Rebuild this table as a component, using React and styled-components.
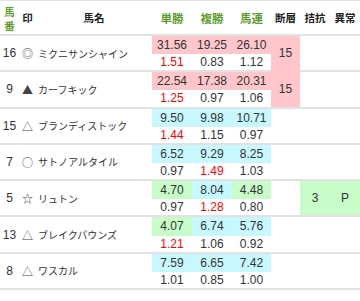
import React from "react";
import styled, { createGlobalStyle } from "styled-components";

const Global = createGlobalStyle`
  html, body { margin: 0; padding: 0; background: #fff; }
  body { font-family: "Liberation Sans", "Noto Sans CJK JP", sans-serif; color: #333; }
`;

const COLS = "19px 17px 116px 40px 40px 39px 29px 30px 30px";
const LINE = "#e2e2e2";
const BG = { pink: "#ffc7cc", cyan: "#c8f8ff", green: "#c8fcc8", none: "transparent" };

const Table = styled.div`
  width: 360px;
  border-top: 1px solid ${LINE};
  box-sizing: border-box;
`;

const HeaderRow = styled.div`
  display: grid;
  grid-template-columns: ${COLS};
  height: 33px;
  border-bottom: 2px solid ${LINE};
`;

const HeadCell = styled.div`
  display: flex;
  align-items: center;
  justify-content: center;
  font-family: "Noto Sans CJK JP", sans-serif;
  font-weight: 700;
  font-size: ${(p) => (p.$green ? "11.5px" : "10.5px")};
  color: ${(p) => (p.$green ? "#5e9c2c" : "#222")};
  line-height: 14px;
  text-align: center;
`;

const Stack = styled.span`
  display: flex;
  flex-direction: column;
  align-items: center;
  gap: 1px;
  font-size: 10.5px;
  line-height: 13px;
  padding-top: 1px;
`;

const Row = styled.div`
  display: grid;
  grid-template-columns: ${COLS};
  grid-template-rows: 18.15px 18.15px;
`;

const Side = styled.div`
  grid-row: 1 / span 2;
  display: flex;
  align-items: center;
  justify-content: ${(p) => p.$align || "center"};
  border-bottom: 2px solid ${LINE};
  font-size: 12px;
  color: #333;
  white-space: nowrap;
`;

const Mark = styled(Side)`
  font-family: "Noto Sans CJK JP", sans-serif;
  font-size: 11px;
  color: #444;
`;

const Name = styled(Side)`
  font-family: "Noto Sans CJK JP", sans-serif;
  font-size: 10px;
  padding-left: 2px;
  color: #333;
`;

const Odds = styled.div`
  display: flex;
  align-items: center;
  justify-content: center;
  font-size: 12px;
  background: ${(p) => BG[p.$bg || "none"]};
  color: ${(p) => (p.$red ? "#ff0000" : "#333")};
  border-bottom: ${(p) => (p.$bottom ? `2px solid ${LINE}` : "none")};
`;

const Block = styled(Side)`
  background: ${(p) => BG[p.$bg || "none"]};
  border-bottom-color: ${(p) => (p.$joined ? BG[p.$bg] : LINE)};
`;

const rows = [
  { no: "16", mark: "◎", name: "ミクニサンシャイン", top: [["31.56", "pink"], ["19.25", "pink"], ["26.10", "pink"]], bot: [["1.51", true], ["0.83"], ["1.12"]], dan: { v: "15", bg: "pink", joined: true } },
  { no: "9", mark: "▲", name: "カーフキック", top: [["22.54", "pink"], ["17.38", "pink"], ["20.31", "pink"]], bot: [["1.25", true], ["0.97"], ["1.06"]], dan: { v: "15", bg: "pink" } },
  { no: "15", mark: "△", name: "ブランディストック", top: [["9.50", "cyan"], ["9.98", "cyan"], ["10.71", "cyan"]], bot: [["1.44", true], ["1.15"], ["0.97"]] },
  { no: "7", mark: "○", name: "サトノアルタイル", top: [["6.52", "cyan"], ["9.29", "cyan"], ["8.25", "cyan"]], bot: [["0.97"], ["1.49", true], ["1.03"]] },
  { no: "5", mark: "☆", name: "リュトン", top: [["4.70", "green"], ["8.04", "cyan"], ["4.48", "green"]], bot: [["0.97"], ["1.28", true], ["0.80"]], kik: "3", ijo: "P" },
  { no: "13", mark: "△", name: "ブレイクパウンズ", top: [["4.07", "green"], ["6.74", "cyan"], ["5.76", "cyan"]], bot: [["1.21", true], ["1.06"], ["0.92"]] },
  { no: "8", mark: "△", name: "ワスカル", top: [["7.59", "cyan"], ["6.65", "cyan"], ["7.42", "cyan"]], bot: [["1.01"], ["0.85"], ["1.00"]] },
];

export default function App() {
  return (
    <>
      <Global />
      <Table>
        <HeaderRow>
          <HeadCell $green>
            <Stack><span>馬</span><span>番</span></Stack>
          </HeadCell>
          <HeadCell>印</HeadCell>
          <HeadCell>馬名</HeadCell>
          <HeadCell $green>単勝</HeadCell>
          <HeadCell $green>複勝</HeadCell>
          <HeadCell $green>馬連</HeadCell>
          <HeadCell>断層</HeadCell>
          <HeadCell>拮抗</HeadCell>
          <HeadCell>異常</HeadCell>
        </HeaderRow>
        {rows.map((r) => (
          <Row key={r.no}>
            <Side style={{ gridColumn: 1 }}>{r.no}</Side>
            <Mark style={{ gridColumn: 2 }}>{r.mark}</Mark>
            <Name style={{ gridColumn: 3 }} $align="flex-start">{r.name}</Name>
            {r.top.map(([v, bg], i) => (
              <Odds key={"t" + i} $bg={bg} style={{ gridColumn: 4 + i, gridRow: 1 }}>{v}</Odds>
            ))}
            {r.bot.map(([v, red], i) => (
              <Odds key={"b" + i} $red={red} $bottom style={{ gridColumn: 4 + i, gridRow: 2 }}>{v}</Odds>
            ))}
            <Block style={{ gridColumn: 7 }} $bg={r.dan ? r.dan.bg : "none"} $joined={r.dan && r.dan.joined}>
              {r.dan ? r.dan.v : ""}
            </Block>
            <Block style={{ gridColumn: 8 }} $bg={r.kik ? "green" : "none"}>{r.kik || ""}</Block>
            <Block style={{ gridColumn: 9 }} $bg={r.ijo ? "green" : "none"}>{r.ijo || ""}</Block>
          </Row>
        ))}
      </Table>
    </>
  );
}
